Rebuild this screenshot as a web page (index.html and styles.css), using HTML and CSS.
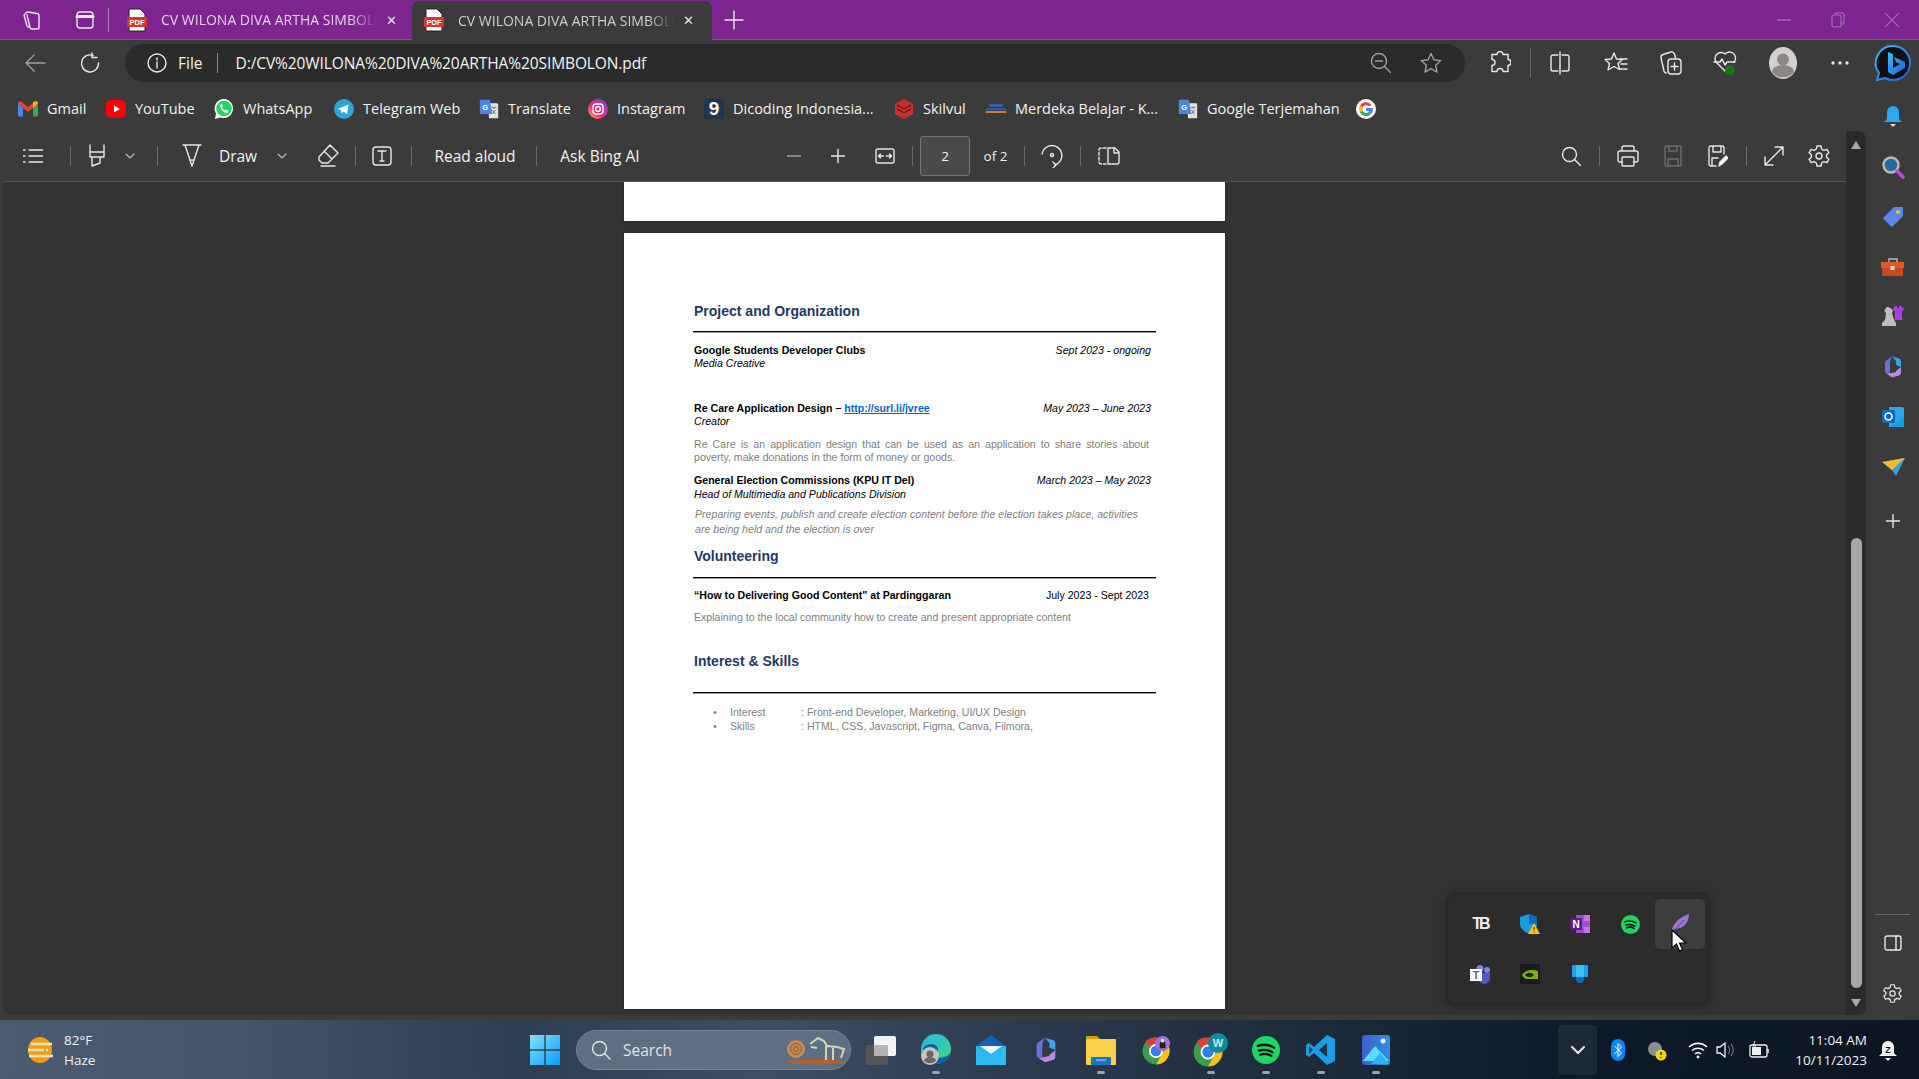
FILE: index.html
```html
<!DOCTYPE html>
<html>
<head>
    <title>CV WILONA DIVA ARTHA SIMBOLON.pdf</title>
    <meta name="viewport" content="width=device-width, initial-scale=1">
    <link rel="stylesheet" href="styles.css">
</head>
<body>

  <svg class="defs" width="0" height="0">
    <defs>
      <symbol id="pdf" viewBox="0 0 20 24">
        <path d="M2 1h11l5 5v17H2z" fill="#fff" stroke="#222" stroke-width="1"/>
        <rect x="0" y="9" width="20" height="10" fill="#d9352b"/>
        <text x="10" y="17" font-size="7.5" font-weight="700" text-anchor="middle" fill="#fff" font-family="Liberation Sans">PDF</text>
      </symbol>
      <symbol id="translate" viewBox="0 0 24 24">
        <path d="M11 5h11a1 1 0 0 1 1 1v17H12z" fill="#dfe3e6"/>
        <path d="M15 10h6M18 10v2M16 18l4-5M16 13l4 5" stroke="#666" stroke-width="1" fill="none"/>
        <path d="M2 1h11l3 17H2a1 1 0 0 1-1-1V2a1 1 0 0 1 1-1z" fill="#4a86e8"/>
        <text x="7.5" y="13" font-size="9" font-weight="700" text-anchor="middle" fill="#fff" font-family="Liberation Sans">G</text>
      </symbol>
      <symbol id="chrome" viewBox="0 0 48 48">
        <circle cx="24" cy="24" r="23" fill="#3a9d4a"/>
        <path d="M24 1a23 23 0 0 1 20 11.5H24a11.5 11.5 0 0 0-10.5 7L6 7.500A23 23 0 0 1 24 1z" fill="#e2402f"/>
        <path d="M44 12.500A23 23 0 0 1 24 47l10-17a11.500 11.500 0 0 0 0-17.500z" fill="#f8c11b"/>
        <circle cx="24" cy="24" r="10.500" fill="#2f7fee" stroke="#fff" stroke-width="3"/>
      </symbol>
      <symbol id="spotify" viewBox="0 0 48 48">
        <circle cx="24" cy="24" r="24" fill="#1ed760"/>
        <path d="M10 17c9-3 20-2 28 3M12 25c8-2 17-1 23 3M14 32c6-2 14-1 19 2" fill="none" stroke="#111" stroke-width="4" stroke-linecap="round"/>
      </symbol>
      <symbol id="copilot" viewBox="0 0 48 48">
        <path d="M22 3l14 4a6 6 0 0 1 4 6v11l-10-4V12z" fill="#3fa3e8"/>
        <path d="M40 24v11a6 6 0 0 1-4 6l-14 4-10-7 18-6z" fill="#b58be6"/>
        <path d="M22 3L12 10a6 6 0 0 0-4 6v16a6 6 0 0 0 4 6l6-2V12z" fill="#6a6fe0"/>
        <path d="M18 18l12 2v14l-12 3z" fill="#3b3b3b"/>
      </symbol>
      <symbol id="gear" viewBox="0 0 24 24">
        <path d="M10 2h4l.6 3 2.400 1.400 2.900-1 2 3.400-2.300 2v2.400l2.300 2-2 3.400-2.900-1L14.600 19l-.6 3h-4l-.6-3L7 17.600l-2.900 1-2-3.400 2.300-2v-2.400l-2.300-2 2-3.400 2.900 1L9.400 5z" fill="none" stroke="currentColor" stroke-width="1.400" stroke-linejoin="round"/>
        <circle cx="12" cy="12" r="3" fill="none" stroke="currentColor" stroke-width="1.400"/>
      </symbol>
    </defs>
  </svg>

  <div class="tabbar">
    <span class="tab-tool tool-space">
      <svg width="22" height="22" viewBox="0 0 22 22" class="ico"><path d="M7 3l9 1.500a2 2 0 0 1 2 2V19a1 1 0 0 1-1 1H11a2 2 0 0 1-2-1.500L6 6"/><path d="M4 5l2-2M3 6l3 11a2 2 0 0 0 2 1"/></svg>
    </span>
    <span class="tab-tool tool-tabs">
      <svg width="20" height="20" viewBox="0 0 20 20" class="ico"><rect x="2" y="2" width="16" height="16" rx="3"/><path d="M2 6.500h16" stroke-width="3"/></svg>
    </span>
    <span class="tab-sep"></span>
    <div class="tab">
      <svg class="tab-fav" width="20" height="24"><use href="#pdf"/></svg>
      <span class="tab-title">CV WILONA DIVA ARTHA SIMBOLON.pdf</span>
      <span class="tab-close">✕</span>
    </div>
    <div class="tab tab-active">
      <svg class="tab-fav" width="20" height="24"><use href="#pdf"/></svg>
      <span class="tab-title">CV WILONA DIVA ARTHA SIMBOLON.pdf</span>
      <span class="tab-close">✕</span>
    </div>
    <span class="tab-new">
      <svg width="20" height="20" viewBox="0 0 20 20" class="ico"><path d="M10 1v18M1 10h18"/></svg>
    </span>
    <div class="win-btns">
      <svg width="14" height="14" viewBox="0 0 14 14"><path d="M0 7h14"/></svg>
      <svg width="14" height="16" viewBox="0 0 14 16"><rect x="1" y="3" width="9" height="12" rx="2"/><path d="M4 3V2a1 1 0 0 1 1-1h6a2 2 0 0 1 2 2v8a1 1 0 0 1-1 1h-2"/></svg>
      <svg width="14" height="14" viewBox="0 0 14 14"><path d="M0 0l14 14M14 0L0 14"/></svg>
    </div>
  </div>

  <div class="navbar">
    <span class="nav-btn back">
      <svg width="22" height="22" viewBox="0 0 22 22" class="ico dim"><path d="M21 11H2M10 3l-8 8 8 8"/></svg>
    </span>
    <span class="nav-btn reload">
      <svg width="22" height="22" viewBox="0 0 22 22" class="ico"><path d="M14 3.500A8.500 8.500 0 1 0 19.500 11"/><path d="M13 1v4.500h5"/></svg>
    </span>
    <div class="address">
      <svg width="20" height="20" viewBox="0 0 20 20" class="ico"><circle cx="10" cy="10" r="9"/><path d="M10 9v6M10 5v2"/></svg>
      <span class="addr-file">File</span>
      <span class="addr-sep"></span>
      <span class="addr-url">D:/CV%20WILONA%20DIVA%20ARTHA%20SIMBOLON.pdf</span>
      <span class="addr-right">
        <svg width="22" height="22" viewBox="0 0 22 22" class="ico dim"><circle cx="9" cy="9" r="7.500"/><path d="M14.500 14.500l6 6M5.500 9h7"/></svg>
        <svg width="22" height="22" viewBox="0 0 22 22" class="ico dim"><path d="M11 1.500l2.900 6.300 6.800.8-5 4.700 1.300 6.800-6-3.400-6 3.400 1.300-6.800-5-4.700 6.800-.8z"/></svg>
      </span>
    </div>
    <div class="nav-tools">
      <span><svg width="22" height="24" viewBox="0 0 22 24" class="ico"><path d="M8 4a3 3 0 0 1 6 0h5v5a3 3 0 0 1 0 6v6h-5a3 3 0 0 0-6 0H3v-6a3 3 0 0 0 0-6V4z" transform="translate(0 -.500)"/></svg></span>
      <span class="nav-sep"></span>
      <span><svg width="22" height="24" viewBox="0 0 22 24" class="ico"><path d="M9 4H4a2 2 0 0 0-2 2v12a2 2 0 0 0 2 2h5M13 4h5a2 2 0 0 1 2 2v12a2 2 0 0 1-2 2h-5M11 1v22"/></svg></span>
      <span><svg width="24" height="24" viewBox="0 0 24 24" class="ico"><path d="M10 2l2.500 6 6 .5-4.500 4 1.500 6-5.500-3-6 3.500 1.500-6.500L1 8.500 7.500 8z"/><path d="M16 8h7M17 13h6M16 18h7"/></svg></span>
      <span><svg width="24" height="26" viewBox="0 0 24 26" class="ico"><path d="M7 23a3 3 0 0 1-2-2L2 8a3 3 0 0 1 2-3.500L12 2a3 3 0 0 1 3.500 2l1 4"/><rect x="9" y="9" width="13" height="15" rx="3"/><path d="M15.500 13v7M12 16.500h7"/></svg></span>
      <span><svg width="24" height="26" viewBox="0 0 24 26" class="ico"><path d="M12 21L4 13a6 6 0 0 1 8-9 6 6 0 0 1 9 8"/><path d="M1 12h6l2-3 3 6 2-3h8"/><circle cx="17" cy="20" r="5" fill="#107c10" stroke="none"/></svg></span>
      <span>
        <svg width="28" height="32" viewBox="0 0 28 32"><ellipse cx="14" cy="16" rx="14" ry="16" fill="#d4d0cc"/><circle cx="14" cy="12.500" r="6" fill="#8a8784"/><path d="M3 25a11 7 0 0 1 22 0 14 14 0 0 1-22 0z" fill="#8a8784"/></svg>
      </span>
      <span><svg width="18" height="4" viewBox="0 0 18 4" fill="#e6e6e6"><circle cx="2" cy="2" r="1.700"/><circle cx="9" cy="2" r="1.700"/><circle cx="16" cy="2" r="1.700"/></svg></span>
      <span>
        <svg width="38" height="38" viewBox="0 0 38 38"><defs><linearGradient id="bingg" x1="0" y1="0" x2="1" y2="1"><stop offset="0" stop-color="#37bdf8"/><stop offset="1" stop-color="#1f5fe0"/></linearGradient></defs><path d="M19 2a17 17 0 1 1-8 32L3 36l2-7A17 17 0 0 1 19 2z" fill="#111" stroke="url(#bingg)" stroke-width="2"/><path d="M14 8l5 2v14l7-4-4-2-2-5 11 5v6l-12 7-5-3z" fill="url(#bingg)"/></svg>
      </span>
    </div>
  </div>

  <div class="content">
    <div class="content-main">

      <div class="bookmarks">
        <span class="bm"><svg width="20" height="16" viewBox="0 0 20 16"><path d="M0 2v12a1.500 1.500 0 0 0 1.500 1.500H5V7z" fill="#4285f4"/><path d="M20 2v12a1.500 1.500 0 0 1-1.500 1.500H15V7z" fill="#34a853"/><path d="M0 2a2 2 0 0 1 3-1.500L10 6l7-5.500A2 2 0 0 1 20 2l-5 5-5 4-5-4z" fill="#ea4335"/><path d="M15 1l2-.500A2 2 0 0 1 20 2l-5 5z" fill="#fbbc04"/></svg>Gmail</span>
        <span class="bm"><svg width="20" height="20" viewBox="0 0 20 20"><rect y="1" width="20" height="18" rx="5" fill="#f00"/><path d="M8 6.500v7l6-3.500z" fill="#fff"/></svg>YouTube</span>
        <span class="bm"><svg width="20" height="22" viewBox="0 0 20 22"><path d="M10 1a9.500 9.500 0 0 0-8 14.500L1 21l5.500-1.500A9.500 9.500 0 1 0 10 1z" fill="#fff"/><circle cx="10" cy="10.500" r="7.800" fill="#25d366"/><path d="M7 6c-1.500 1-1 3.500 1 6s4.500 3.500 6 2.500l.5-1.500-2.500-1.500-1 1c-1.500-.5-2.500-2-3-3l1-1-1-2.500z" fill="#fff"/></svg>WhatsApp</span>
        <span class="bm"><svg width="20" height="20" viewBox="0 0 20 20"><circle cx="10" cy="10" r="10" fill="#2fa5da"/><path d="M3.500 10l11-4.500-1.500 9.500-3.500-2.500-2 2-.5-3.500z" fill="#fff"/></svg>Telegram Web</span>
        <span class="bm"><svg width="20" height="20"><use href="#translate"/></svg>Translate</span>
        <span class="bm"><svg width="20" height="20" viewBox="0 0 20 20"><defs><linearGradient id="insta" x1="0" y1="1" x2="1" y2="0"><stop offset="0" stop-color="#fdc04c"/><stop offset=".4" stop-color="#ee2a7b"/><stop offset="1" stop-color="#7b3fd1"/></linearGradient></defs><circle cx="10" cy="10" r="10" fill="url(#insta)"/><rect x="5" y="5" width="10" height="10" rx="3" fill="none" stroke="#fff" stroke-width="1.400"/><circle cx="10" cy="10" r="2.400" fill="none" stroke="#fff" stroke-width="1.400"/></svg>Instagram</span>
        <span class="bm"><span class="dicoding">9</span>Dicoding Indonesia...</span>
        <span class="bm"><svg width="20" height="20" viewBox="0 0 20 20"><path d="M10 0l9 5v10l-9 5-9-5V5z" fill="#c8302b"/><path d="M3 6l7 4 7-4M3 10l7 4 7-4" fill="none" stroke="#7c1a17" stroke-width="1.500"/></svg>Skilvul</span>
        <span class="bm"><svg width="20" height="12" viewBox="0 0 20 12"><rect x="3" y="1" width="14" height="3" fill="#3a5ba8"/><rect y="5" width="20" height="2" fill="#3556a3"/><rect y="8" width="20" height="2" fill="#c9803a"/></svg>Merdeka Belajar - K...</span>
        <span class="bm"><svg width="20" height="20"><use href="#translate"/></svg>Google Terjemahan</span>
        <span class="bm"><svg width="20" height="20" viewBox="0 0 20 20"><circle cx="10" cy="10" r="10" fill="#fff"/><path d="M15.500 6A7 7 0 0 0 4 6.500l2.500 2A4 4 0 0 1 13 7.500z" fill="#ea4335"/><path d="M4 6.500a7 7 0 0 0 0 7l2.500-2a4 4 0 0 1 0-3z" fill="#fbbc04"/><path d="M4 13.500a7 7 0 0 0 10.500 2l-2.400-2A4 4 0 0 1 6.500 11.500z" fill="#34a853"/><path d="M17 10a7 7 0 0 1-2.500 5.500l-2.400-2a3 3 0 0 0 1-1.500H10V9h7z" fill="#4285f4"/></svg></span>
      </div>

      <div class="pdf">
        <div class="pdf-col">
          <div class="pdf-toolbar">
            <div class="pt-left">
              <span><svg width="20" height="16" viewBox="0 0 20 16" class="ico"><path d="M6 2h14M6 8h14M6 14h14M0 2h2M0 8h2M0 14h2"/></svg></span>
              <span class="pt-sep"></span>
              <span><svg width="20" height="24" viewBox="0 0 20 24" class="ico"><path d="M3 1v7h14V1M3 8v5h14V8M5 13v9l8-3v-6"/></svg></span>
              <span><svg width="10" height="6" viewBox="0 0 10 6" class="ico thin"><path d="M1 1l4 4 4-4"/></svg></span>
              <span class="pt-sep"></span>
              <span><svg width="20" height="24" viewBox="0 0 20 24" class="ico"><path d="M1 1h18M3 1l5 15h4l5-15M8 16l2 6 2-6"/></svg></span>
              <span class="pt-text">Draw</span>
              <span><svg width="10" height="6" viewBox="0 0 10 6" class="ico thin"><path d="M1 1l4 4 4-4"/></svg></span>
              <span><svg width="22" height="24" viewBox="0 0 22 24" class="ico"><path d="M13 1l8 8-10 10H5l-3-3V13zM7 7l8 8M4 22h14"/></svg></span>
              <span class="pt-sep"></span>
              <span><svg width="20" height="20" viewBox="0 0 20 20" class="ico"><rect x="1" y="1" width="18" height="18" rx="3"/><path d="M6 5h8M10 5v10M8 15h4"/></svg></span>
              <span class="pt-sep"></span>
              <span class="pt-text">Read aloud</span>
              <span class="pt-sep"></span>
              <span class="pt-text">Ask Bing AI</span>
            </div>
            <div class="pt-mid">
              <span><svg width="14" height="2" viewBox="0 0 14 2" class="ico dim"><path d="M0 1h14"/></svg></span>
              <span><svg width="14" height="14" viewBox="0 0 14 14" class="ico"><path d="M0 7h14M7 0v14"/></svg></span>
              <span><svg width="20" height="16" viewBox="0 0 20 16" class="ico"><rect x="1" y="1" width="18" height="14" rx="2"/><path d="M3.500 8h5M3.500 8l2-2M3.500 8l2 2M11.500 8h5M16.500 8l-2-2M16.500 8l-2 2"/></svg></span>
              <span class="pt-sep"></span>
              <span><span class="page-num">2</span></span>
              <span class="pt-text small">of 2</span>
              <span class="pt-sep"></span>
              <span><svg width="22" height="24" viewBox="0 0 22 24" class="ico"><path d="M1 10a10 10 0 1 1 13 11M12 18l3 3-3 3"/><circle cx="11" cy="11" r="1.500"/></svg></span>
              <span class="pt-sep"></span>
              <span><svg width="22" height="18" viewBox="0 0 22 18" class="ico"><path d="M8 1H3a2 2 0 0 0-2 2v12a2 2 0 0 0 2 2h5" stroke-dasharray="3 2"/><path d="M10 1h7l4 4v10a2 2 0 0 1-2 2h-9zM16 1v5h5"/></svg></span>
            </div>
            <div class="pt-right">
              <span><svg width="20" height="20" viewBox="0 0 20 20" class="ico"><circle cx="8.500" cy="8.500" r="7"/><path d="M13.500 13.500l6 6"/></svg></span>
              <span class="pt-sep"></span>
              <span><svg width="22" height="22" viewBox="0 0 22 22" class="ico"><path d="M5 6V3a2 2 0 0 1 2-2h8a2 2 0 0 1 2 2v3M5 17H3a2 2 0 0 1-2-2V8a2 2 0 0 1 2-2h16a2 2 0 0 1 2 2v7a2 2 0 0 1-2 2h-2"/><rect x="5" y="12" width="12" height="9" rx="1"/></svg></span>
              <span><svg width="18" height="22" viewBox="0 0 18 22" class="ico gray"><rect x="1" y="1" width="16" height="20" rx="2"/><path d="M5 1v5h8V1M4 21v-7h10v7"/></svg></span>
              <span><svg width="20" height="22" viewBox="0 0 20 22" class="ico"><path d="M8 21H3a2 2 0 0 1-2-2V3a2 2 0 0 1 2-2h11a2 2 0 0 1 2 2v6M5 1v6h8V1M4 21v-8h6"/><path d="M11 21l1-4 6-6 2 2-6 6z" fill="#fff"/></svg></span>
              <span class="pt-sep"></span>
              <span><svg width="22" height="22" viewBox="0 0 22 22" class="ico"><path d="M2 20L20 2M12 2h8v8M2 12v8h8"/></svg></span>
              <span><svg width="24" height="24" class="gear-ico"><use href="#gear"/></svg></span>
            </div>
          </div>

          <div class="pdf-view">
            <div class="page page-stub"></div>
            <div class="page page-cv">
              <div class="cv-h">Project and Organization</div>
              <div class="cv-rule rule-first"></div>
              <div class="cv-row first"><b>Google Students Developer Clubs</b><i>Sept 2023 - ongoing</i></div>
              <div class="cv-role">Media Creative</div>
              <div class="cv-row gap-l"><b>Re Care Application Design – <a href="#">http://surl.li/jvree</a></b><i>May 2023 – June 2023</i></div>
              <div class="cv-role">Creator</div>
              <div class="cv-desc">Re Care is an application design that can be used as an application to share stories about poverty, make donations in the form of money or goods.</div>
              <div class="cv-row gap-m"><b>General Election Commissions (KPU IT Del)</b><i>March 2023 – May 2023</i></div>
              <div class="cv-role gap-xs">Head of Multimedia and Publications Division</div>
              <div class="cv-note">Preparing events, publish and create election content before the election takes place, activities are being held and the election is over</div>
              <div class="cv-h h-vol">Volunteering</div>
              <div class="cv-rule rule-vol"></div>
              <div class="cv-row vol"><b>“How to Delivering Good Content" at Pardinggaran</b><span class="vol-date">July 2023 - Sept 2023</span></div>
              <div class="cv-line">Explaining to the local community how to create and present appropriate content</div>
              <div class="cv-h h-int">Interest &amp; Skills</div>
              <div class="cv-rule rule-int"></div>
              <div class="skills">
                <div class="skill"><span class="dot">•</span><span>Interest</span><span>: Front-end Developer, Marketing, UI/UX Design</span></div>
                <div class="skill"><span class="dot">•</span><span>Skills</span><span>: HTML, CSS, Javascript, Figma, Canva, Filmora,</span></div>
              </div>
            </div>
          </div>
        </div>
        <div class="scrollbar">
          <span class="sb-up"></span>
          <span class="sb-thumb"></span>
          <span class="sb-down"></span>
        </div>
      </div>
    </div>

    <div class="sidebar">
      <span><svg width="20" height="24" viewBox="0 0 20 24"><path d="M10 1a6 6 0 0 1 6 6v7l3 3H1l3-3V7a6 6 0 0 1 6-6z" fill="#2fa7f0"/><path d="M7 19h6l-3 3z" fill="#ddd"/></svg></span>
      <span><svg width="24" height="24" viewBox="0 0 24 24"><circle cx="10" cy="10" r="7.500" fill="#1f6f9e" stroke="#b9b9b9" stroke-width="2.500"/><path d="M16 16l6 6" stroke="#c04bd8" stroke-width="3.500" stroke-linecap="round"/></svg></span>
      <span><svg width="22" height="22" viewBox="0 0 22 22"><path d="M12 1h8a1 1 0 0 1 1 1v8L11 20a2 2 0 0 1-2.500 0L2 13.500a2 2 0 0 1 0-2.500z" fill="#5c86f2"/><circle cx="16" cy="6" r="2" fill="#f6c20f"/></svg></span>
      <span><svg width="24" height="20" viewBox="0 0 24 20"><path d="M8 5V2h8v3" fill="none" stroke="#b5b5b5" stroke-width="1.500"/><rect y="5" width="23" height="6" fill="#e2582a"/><rect x="1" y="11" width="21" height="8" fill="#c94a22"/><rect x="9.500" y="9" width="4" height="4" fill="#ddd"/></svg></span>
      <span><svg width="24" height="24" viewBox="0 0 24 24"><path d="M9 3a3 3 0 0 1 2 5l2 7 2 3v3H1v-3l3-3 1-7a3 3 0 0 1 4-5z" fill="#bdbdbd"/><path d="M14 1h2v2h2V1h3v2h2V1v3l-2 3v6l1 2h-9l1-2V7l-2-3z" fill="#a93fe0"/></svg></span>
      <span><svg width="24" height="24"><use href="#copilot"/></svg></span>
      <span><svg width="22" height="22" viewBox="0 0 22 22"><path d="M7 1h13a2 2 0 0 1 2 2v17a1 1 0 0 1-1 1H7z" fill="#28a8ea"/><path d="M22 11v9a1 1 0 0 1-1 1H8z" fill="#14a0e0"/><rect y="4" width="13" height="13" rx="1.500" fill="#0f6cbd"/><circle cx="6.500" cy="10.500" r="3.500" fill="none" stroke="#fff" stroke-width="1.600"/></svg></span>
      <span><svg width="24" height="20" viewBox="0 0 24 20"><path d="M1 5l23-4-9 18-4-6z" fill="#2aa1ea"/><path d="M1 5l23-4-13 12z" fill="#f5b62a"/></svg></span>
      <span class="side-plus"><svg width="14" height="14" viewBox="0 0 14 14" class="ico"><path d="M0 7h14M7 0v14"/></svg></span>
      <div class="side-bottom">
        <div class="side-line"></div>
        <span><svg width="18" height="16" viewBox="0 0 18 16" class="ico"><rect x="1" y="1" width="16" height="14" rx="2"/><path d="M12 1v14"/></svg></span>
        <span><svg width="21" height="21" class="gear-ico"><use href="#gear"/></svg></span>
      </div>
    </div>
  </div>

  <div class="taskbar">
    <div class="weather">
      <svg width="30" height="30" viewBox="0 0 30 30"><ellipse cx="15" cy="15" rx="12" ry="13" fill="#f59d12"/><path d="M6 9h21M3 15h16M21 15h2M4 21h24" stroke="#f2e3c0" stroke-width="2.500"/></svg>
      <div class="weather-text"><div>82°F</div><div>Haze</div></div>
    </div>
    <svg class="start" width="30" height="30" viewBox="0 0 30 30"><defs><linearGradient id="win" x1="0" y1="0" x2="1" y2="1"><stop offset="0" stop-color="#7fe3ff"/><stop offset="1" stop-color="#0f9bf5"/></linearGradient></defs><path d="M0 0h14.300v14.300H0zM15.700 0H30v14.300H15.700zM0 15.700h14.300V30H0zM15.700 15.700H30V30H15.700z" fill="url(#win)"/></svg>
    <div class="searchbox">
      <svg width="20" height="20" viewBox="0 0 20 20" class="ico"><circle cx="8.500" cy="8.500" r="7"/><path d="M13.500 13.500l5.500 5.500"/></svg>
      <span>Search</span>
      <svg class="search-art" width="60" height="30" viewBox="0 0 60 30"><ellipse cx="30" cy="27" rx="29" ry="2.500" fill="#b5612c"/><circle cx="10" cy="14" r="9" fill="#c58a55"/><circle cx="10" cy="14" r="5.500" fill="none" stroke="#8a5b32"/><circle cx="10" cy="14" r="2.500" fill="none" stroke="#8a5b32"/><path d="M24 9l8-6 6 3 3 5 10 1 7 2-3 9M40 11v14M47 13v12M25 12l6 1" fill="none" stroke="#d8d2b8" stroke-width="2"/></svg>
    </div>
    <div class="apps">
      <span><svg width="32" height="30" viewBox="0 0 32 30"><rect x="1" y="10" width="22" height="20" rx="3" fill="#555"/><rect x="9" y="1" width="22" height="20" rx="2" fill="#f2f2f2"/><rect x="9" y="10" width="14" height="11" fill="#b5b5b5"/></svg></span>
      <span class="on"><svg width="30" height="32" viewBox="0 0 30 32"><defs><linearGradient id="edge" x1="0" y1="0" x2="1" y2="1"><stop offset="0" stop-color="#2bb7e8"/><stop offset="1" stop-color="#3ed97b"/></linearGradient></defs><circle cx="15" cy="15" r="15" fill="url(#edge)"/><path d="M2 14c5-6 15-5 15 2 0 3-2 4-4 4 5 6 12 4 16-1-1 7-7 11-14 11C7 30 1 23 2 14z" fill="#135ea8"/><circle cx="9" cy="22" r="9" fill="#c7c4c0"/><circle cx="9" cy="20" r="3.500" fill="#6b6966"/><path d="M3 27a6 4 0 0 1 12 0 9 9 0 0 1-12 0z" fill="#6b6966"/></svg></span>
      <span><svg width="30" height="30" viewBox="0 0 30 30"><path d="M15 0l15 11H0z" fill="#0f62b5"/><path d="M0 11h30v19H0z" fill="#28b6ee"/><path d="M4 11h22l-11 8z" fill="#f4f4f4"/><path d="M0 12l15 10 15-10v18H0z" fill="#2cbcf2"/></svg></span>
      <span><svg width="28" height="30"><use href="#copilot"/></svg></span>
      <span class="on"><svg width="30" height="30" viewBox="0 0 30 30"><path d="M0 2a1 1 0 0 1 1-1h10l3 3H0z" fill="#d89f06"/><rect y="4" width="30" height="26" rx="1" fill="#fbd04a"/><rect x="5" y="22" width="20" height="8" rx="1" fill="#1276c8"/><path d="M10 25h10" stroke="#bfe0f7"/></svg></span>
      <span><svg width="30" height="30" viewBox="0 0 30 32" class="badged"><use href="#chrome" width="30" height="30" y="2"/><circle cx="22" cy="9" r="8" fill="#a373d9"/><path d="M19 14v-5a3 3 0 0 1 6 0v5z" fill="#222"/><circle cx="22" cy="6" r="2" fill="#ddd"/></svg></span>
      <span class="on"><svg width="36" height="34" viewBox="0 0 36 34" class="badged-w"><use href="#chrome" width="30" height="30" y="4"/><circle cx="25" cy="10" r="10" fill="#0e8c9a"/><text x="25" y="14" font-size="11" font-weight="700" text-anchor="middle" fill="#cdeef2" font-family="Liberation Sans">W</text></svg></span>
      <span class="on"><svg width="28" height="28"><use href="#spotify"/></svg></span>
      <span class="on"><svg width="30" height="30" viewBox="0 0 30 30"><path d="M21 0l8 4v22l-8 4-13-12-5 4-3-2v-10l3-2 5 4z" fill="#1b9de8"/><path d="M21 8l-8 7 8 7z" fill="#2b2f3a"/><path d="M3 11l4 4-4 4z" fill="#2b3a50"/></svg></span>
      <span class="on"><svg width="28" height="30" viewBox="0 0 28 30"><defs><linearGradient id="photos" x1="0" y1="0" x2="1" y2="0"><stop offset="0" stop-color="#3f5fc4"/><stop offset="1" stop-color="#2d8fe8"/></linearGradient></defs><rect width="28" height="30" rx="3" fill="url(#photos)"/><circle cx="21" cy="6" r="2.500" fill="#e8eefb"/><path d="M1 26l12-15 14 15z" fill="#5bdcf8"/><path d="M9 29l9-11 9 11z" fill="#2ab5ef"/></svg></span>
    </div>
    <div class="tray">
      <span class="tray-more"><svg width="14" height="8" viewBox="0 0 14 8" class="ico"><path d="M1 1l6 6 6-6" stroke-width="2"/></svg></span>
      <svg class="tray-bt" width="14" height="22" viewBox="0 0 14 22"><rect width="14" height="22" rx="7" fill="#0a84ff"/><path d="M3.500 7l7 7-3.500 3.500v-13L10.500 8l-7 7" fill="none" stroke="#fff"/></svg>
      <svg class="tray-cloud" width="22" height="22" viewBox="0 0 22 22"><circle cx="9" cy="10" r="7" fill="#8b8f95"/><circle cx="15" cy="16" r="5.500" fill="#f0d60a"/><path d="M15 13v3M15 18v1" stroke="#222" stroke-width="1.500"/></svg>
      <svg class="tray-wifi" width="20" height="18" viewBox="0 0 20 18" class="ico"><path d="M1 6a13 13 0 0 1 18 0M4 9.500a9 9 0 0 1 12 0M7 13a4.500 4.500 0 0 1 6 0" fill="none" stroke="#f2f2f2" stroke-width="1.600"/><circle cx="10" cy="16" r="1.400" fill="#f2f2f2"/></svg>
      <svg class="tray-vol" width="20" height="18" viewBox="0 0 20 18"><path d="M1 6h3l5-4v14l-5-4H1z" fill="none" stroke="#f2f2f2" stroke-width="1.300"/><path d="M12 5a6 6 0 0 1 0 8M15 3a9 9 0 0 1 0 12" fill="none" stroke="#777" stroke-width="1.200"/></svg>
      <svg class="tray-bat" width="22" height="20" viewBox="0 0 22 20"><rect x="1" y="5" width="17" height="12" rx="2" fill="none" stroke="#f2f2f2" stroke-width="1.300"/><rect x="3" y="7" width="9" height="8" fill="#f2f2f2"/><path d="M19 9v4" stroke="#f2f2f2" stroke-width="1.500"/><path d="M6 1l-2 5h3" fill="none" stroke="#f2f2f2"/></svg>
      <div class="clock"><div>11:04 AM</div><div>10/11/2023</div></div>
      <svg class="tray-bell" width="20" height="24" viewBox="0 0 20 24"><path d="M10 3a6 6 0 0 1 6 6v6l3 3H1l3-3V9a6 6 0 0 1 6-6z" fill="#f2f2f2"/><path d="M7 20h6l-3 3z" fill="#f2f2f2"/><text x="10" y="15" font-size="9" font-weight="700" text-anchor="middle" fill="#111" font-family="Liberation Sans">Z</text></svg>
    </div>
  </div>

  <div class="tray-popup">
    <span><span class="tb-logo">TB</span></span>
    <span><svg width="20" height="20" viewBox="0 0 20 20"><path d="M9 0l8 3v7c0 5-4 8-8 10-4-2-9-5-9-10V3z" fill="#1a9be0"/><path d="M9 0l8 3v7H9z" fill="#0e6fb8"/><path d="M14 9l6 11H8z" fill="#fcc419"/><path d="M14 13v3M14 17.500v1" stroke="#222"/></svg></span>
    <span><svg width="20" height="18" viewBox="0 0 20 18"><rect x="6" width="14" height="18" fill="#a24fcb"/><path d="M14 0h6v6h-6zM14 12h6v6h-6z" fill="#c377e0"/><rect y="3" width="12" height="12" fill="#5a1e8c"/><text x="6" y="13" font-size="10" font-weight="700" text-anchor="middle" fill="#fff" font-family="Liberation Sans">N</text></svg></span>
    <span><svg width="19" height="19"><use href="#spotify"/></svg></span>
    <span class="tray-hover"><svg width="20" height="22" viewBox="0 0 20 22"><path d="M1 20C3 9 10 4 19 1c0 9-6 15-15 15z" fill="#9d74d2"/><path d="M1 21L14 7" stroke="#6b3fa8"/></svg></span>
    <span><svg width="21" height="19" viewBox="0 0 21 19"><circle cx="17" cy="5" r="3" fill="#7b83eb"/><circle cx="10" cy="3.500" r="3.500" fill="#7b83eb"/><path d="M6 8h14v5a6 6 0 0 1-12 0z" fill="#5059c9"/><rect y="4" width="12" height="12" fill="#fff"/><text x="6" y="13.500" font-size="10" font-weight="700" text-anchor="middle" fill="#4b53bc" font-family="Liberation Sans">T</text></svg></span>
    <span><svg width="20" height="20" viewBox="0 0 20 20"><rect width="20" height="20" fill="#1b1b1b"/><path d="M2 11c3-5 9-6 16-4v8H7C5 15 3 13 2 11z" fill="#76b900"/><path d="M5 11c3-3 6-3 9 0-3 3-6 3-9 0z" fill="#1b1b1b"/></svg></span>
    <span><svg width="18" height="18" viewBox="0 0 18 18"><path d="M1 1a1 1 0 0 1 1-1h14a1 1 0 0 1 1 1v11H1z" fill="#1da1e8"/><rect x="5" y="0" width="8" height="12" fill="#3cc0f2"/><path d="M5 12h8v3l-2 3H7l-2-3z" fill="#0d6cc0"/></svg></span>
  </div>

  <svg class="cursor" width="16" height="24" viewBox="0 0 16 24"><path d="M1 1v18l4.500-4 3 7 3-1.500-3-6.500H15z" fill="#fff" stroke="#000" stroke-width="1.200"/></svg>

</body>
</html>
```

FILE: styles.css
```css
* {
  box-sizing: border-box;
}

html, body {
  margin: 0;
  height: 100%;
}

body {
  width: 1919px;
  height: 1079px;
  overflow: hidden;
  display: flex;
  flex-direction: column;
  position: relative;
  font-family: "Open Sans", "Noto Sans", sans-serif;
  color: #f2f2f2;
  background-color: #3b3b3b;
}

.defs {
  position: absolute;
}

svg {
  display: block;
  flex: none;
}

.ico {
  fill: none;
  stroke: #e8e8e8;
  stroke-width: 1.4;
  stroke-linecap: round;
  stroke-linejoin: round;
}

.ico.thin {
  stroke: #bdbdbd;
  stroke-width: 1.1;
}

.ico.dim {
  stroke: #a0a0a0;
}

.ico.gray {
  stroke: #6e6e6e;
}

.gear-ico {
  color: #e8e8e8;
}

/* tab strip */
.tabbar {
  height: 40px;
  flex: none;
  display: flex;
  align-items: center;
  background-color: #7e2490;
  border-bottom: 1px solid #8c4a9a;
}

.tab-tool {
  display: flex;
  justify-content: center;
}

.tool-space {
  width: 64px;
}

.tool-tabs {
  width: 42px;
}

.tab-sep {
  width: 1px;
  height: 24px;
  margin-left: 2px;
  background-color: #b27fbd;
}

.tab {
  width: 298px;
  height: 39px;
  margin-left: 5px;
  padding: 0 12px 0 13px;
  display: flex;
  align-items: center;
  font-size: 14px;
  color: #e2d3e6;
}

.tab + .tab {
  margin-left: 0;
}

.tab-active {
  width: 300px;
  margin-top: 1px;
  padding: 0 12px 0 12px;
  background-color: #3b3b3b;
  border-radius: 7px 7px 0 0;
  color: #cfcfcf;
}

.tab-fav {
  margin-right: 14px;
}

.tab-title {
  width: 216px;
  overflow: hidden;
  white-space: nowrap;
  -webkit-mask-image: linear-gradient(to right, #000 88%, transparent);
  mask-image: linear-gradient(to right, #000 88%, transparent);
}

.tab-close {
  margin-left: 9px;
  font-size: 13px;
  color: #e8e8e8;
}

.tab-new {
  margin-left: 12px;
}

.win-btns {
  margin-left: auto;
  width: 142px;
  padding-right: 20px;
  display: flex;
  justify-content: space-between;
  align-items: center;
}

.win-btns svg {
  fill: none;
  stroke: #a86db5;
  stroke-width: 1.2;
}

/* nav row */
.navbar {
  height: 46px;
  flex: none;
  display: flex;
  align-items: center;
  background-color: #3b3b3b;
}

.nav-btn {
  display: flex;
  justify-content: center;
}

.back {
  width: 70px;
}

.reload {
  width: 40px;
}

.address {
  width: 1340px;
  height: 38px;
  margin-left: 15px;
  padding: 0 23px 0 22px;
  display: flex;
  align-items: center;
  background-color: #2b2b2b;
  border-radius: 19px;
}

.addr-file {
  margin-left: 11px;
  font-size: 15.5px;
}

.addr-sep {
  width: 1px;
  height: 20px;
  margin: 0 18px 0 14px;
  background-color: #8a8a8a;
}

.addr-url {
  font-size: 15.5px;
  letter-spacing: -0.1px;
  white-space: nowrap;
}

.addr-right {
  margin-left: auto;
  display: flex;
  gap: 28px;
}

.nav-tools {
  margin-left: 10px;
  display: grid;
  grid-template-columns: 50px 10px 50px 62px 48px 60px 56px 58px 48px;
  align-items: center;
  justify-items: center;
}

.nav-sep {
  width: 1px;
  height: 30px;
  background-color: #666;
}

/* bookmarks and viewer */
.content {
  flex: 1;
  display: flex;
  min-height: 0;
}

.content-main {
  width: 1866px;
  flex: none;
  display: flex;
  flex-direction: column;
}

.bookmarks {
  height: 45px;
  flex: none;
  padding-left: 18px;
  display: grid;
  grid-template-columns: 88px 108px 120px 145px 109px 116px 190px 92px 192px 178px 30px;
  align-items: center;
  font-size: 14.5px;
  white-space: nowrap;
}

.bm {
  display: flex;
  align-items: center;
  gap: 9px;
}

.dicoding {
  width: 20px;
  height: 20px;
  background-color: #20364e;
  color: #fff;
  font: 700 19px/19px "Liberation Sans", sans-serif;
  text-align: center;
}

.pdf {
  height: 884px;
  margin-left: 3px;
  flex: none;
  display: flex;
  background-color: #333;
  border-radius: 8px;
  overflow: hidden;
}

.pdf-col {
  width: 1843px;
  display: flex;
  flex-direction: column;
}

.pdf-toolbar {
  height: 51px;
  flex: none;
  padding-left: 2px;
  display: flex;
  align-items: center;
  background-color: #3b3b3b;
  border-bottom: 1px solid #555;
}

.pt-left, .pt-mid, .pt-right {
  display: grid;
  align-items: center;
  justify-items: center;
}

.pt-left {
  grid-template-columns: 56px 18px 36px 30px 24px 46px 46px 42px 50px 4px 50px 8px 120px 2px 126px;
}

.pt-mid {
  margin-left: 109px;
  grid-template-columns: 44px 44px 50px 5px 60px 41px 16px 40px 16px 42px;
}

.pt-right {
  margin-left: 415px;
  grid-template-columns: 52px 5px 52px 38px 52px 4px 52px 38px;
}

.pt-left > span, .pt-mid > span, .pt-right > span {
  display: flex;
  justify-content: center;
}

.pt-sep {
  width: 1px;
  height: 20px;
  background-color: #6b6b6b;
}

.pt-text {
  font-size: 15.5px;
  white-space: nowrap;
}

.pt-text.small {
  font-size: 13.5px;
}

.page-num {
  width: 50px;
  height: 40px;
  display: flex;
  align-items: center;
  justify-content: center;
  font-size: 13.5px;
  background-color: #4a4a4a;
  border: 1px solid #777;
  border-radius: 3px;
}

.pdf-view {
  flex: 1;
  min-height: 0;
  display: flex;
  flex-direction: column;
  align-items: center;
  gap: 12px;
  overflow: hidden;
}

.page {
  width: 601px;
  flex: none;
  background-color: #fff;
  box-shadow: 0 0 4px rgba(0, 0, 0, 0.3);
}

.page-stub {
  height: 39px;
}

/* the cv page */
.page-cv {
  height: 776px;
  padding: 69px 69px 0;
  font-family: "Liberation Sans", Arial, sans-serif;
  font-size: 10.6px;
  line-height: 13px;
  color: #000;
}

.cv-h {
  padding-left: 1px;
  font-size: 14px;
  font-weight: 700;
  line-height: 18px;
  color: #1f3864;
}

.cv-rule {
  height: 1px;
  background-color: #000;
  box-shadow: 0 0.4px 0 #000;
}

.rule-first {
  margin-top: 11px;
}

.rule-vol {
  margin-top: 12px;
}

.rule-int {
  margin-top: 22px;
}

.cv-row {
  padding: 0 5px 0 1px;
  display: flex;
  justify-content: space-between;
}

.cv-row a {
  color: #0563c1;
}

.cv-row.first {
  margin-top: 12px;
}

.gap-l {
  margin-top: 32px;
}

.gap-m {
  margin-top: 10px;
}

.gap-xs {
  margin-top: 1px;
}

.cv-role {
  padding-left: 1px;
  font-style: italic;
}

.cv-desc {
  margin-top: 10px;
  padding: 0 7px 0 1px;
  color: #808080;
  text-align: justify;
}

.cv-note {
  margin-top: 6px;
  padding: 0 7px 0 2px;
  line-height: 15px;
  font-style: italic;
  color: #808080;
}

.h-vol {
  margin-top: 10px;
}

.cv-row.vol {
  margin-top: 11px;
  padding-right: 7px;
}

.cv-line {
  margin-top: 9px;
  padding-left: 1px;
  color: #808080;
}

.h-int {
  margin-top: 28px;
}

.skills {
  margin-top: 12px;
  color: #808080;
  line-height: 14px;
}

.skill {
  display: grid;
  grid-template-columns: 37px 71px 1fr;
}

.dot {
  padding-left: 20px;
}

/* scrollbar */
.scrollbar {
  width: 20px;
  flex: none;
  padding-top: 10px;
  display: flex;
  flex-direction: column;
  align-items: center;
  background-color: #2b2b2b;
}

.sb-up, .sb-down {
  width: 0;
  height: 0;
  border-left: 5.5px solid transparent;
  border-right: 5.5px solid transparent;
}

.sb-up {
  border-bottom: 8px solid #a8a8a8;
}

.sb-thumb {
  width: 11px;
  height: 450px;
  margin-top: 389px;
  border-radius: 6px;
  background-color: #a6a6a6;
}

.sb-down {
  margin-top: 11px;
  border-top: 8px solid #a8a8a8;
}

/* right sidebar */
.sidebar {
  width: 53px;
  flex: none;
  margin-bottom: 0;
  padding: 6px 0 2px;
  display: flex;
  flex-direction: column;
  align-items: center;
}

.sidebar > span, .side-bottom > span {
  height: 50px;
  flex: none;
  display: flex;
  align-items: center;
  justify-content: center;
}

.side-plus {
  margin-top: 4px;
}

.side-bottom {
  margin-top: auto;
  display: flex;
  flex-direction: column;
  align-items: center;
}

.side-line {
  width: 35px;
  height: 1px;
  margin-bottom: 3px;
  background-color: #6a6a6a;
}

/* taskbar */
.taskbar {
  height: 59px;
  flex: none;
  display: flex;
  align-items: center;
  background: linear-gradient(to right, #4c5c70 0, #44566a 12%, #2d3d52 27%, #3e4f63 40%, #2d3c50 52%, #1d2b3b 68%, #0f1a29 82%, #0b1522 100%);
}

.weather {
  width: 530px;
  padding-left: 25px;
  display: flex;
  align-items: center;
  gap: 9px;
  flex: none;
}

.weather-text {
  font-size: 13.5px;
  line-height: 20px;
}

.searchbox {
  width: 275px;
  height: 40px;
  margin-left: 16px;
  padding: 0 4px 0 14px;
  flex: none;
  display: flex;
  align-items: center;
  gap: 12px;
  font-size: 15.5px;
  color: #dfe3e8;
  background-color: #5f6f82;
  border: 1px solid #74838f;
  border-radius: 20px;
}

.search-art {
  margin-left: auto;
}

.apps {
  margin-left: 2px;
  display: grid;
  grid-template-columns: repeat(10, 55px);
  align-items: center;
  justify-items: center;
}

.apps > span {
  height: 59px;
  width: 55px;
  display: flex;
  align-items: center;
  justify-content: center;
  position: relative;
}

.apps > span.on::after {
  content: "";
  position: absolute;
  left: 24px;
  bottom: 5px;
  width: 8px;
  height: 3px;
  border-radius: 2px;
  background-color: #9aa3ad;
}

.tray {
  margin-left: 155px;
  flex: 1;
  display: flex;
  align-items: center;
}

.tray-more {
  width: 39px;
  height: 50px;
  display: flex;
  align-items: center;
  justify-content: center;
  background-color: #1e2937;
  border-radius: 4px;
}

.tray-bt {
  margin-left: 14px;
}

.tray-cloud {
  margin-left: 21px;
}

.tray-wifi {
  margin-left: 20px;
}

.tray-vol {
  margin-left: 8px;
}

.tray-bat {
  margin-left: 13px;
}

.clock {
  width: 96px;
  font-size: 13.5px;
  line-height: 20px;
  text-align: right;
  white-space: nowrap;
}

.tray-bell {
  margin-left: 11px;
}

/* tray overflow flyout */
.tray-popup {
  position: absolute;
  left: 1447px;
  top: 893px;
  width: 262px;
  height: 111px;
  padding: 5px 7px;
  display: grid;
  grid-template-columns: repeat(5, 50px);
  grid-auto-rows: 50px;
  align-items: center;
  justify-items: center;
  background-color: #2c2c2c;
  border: 1px solid #262626;
  border-radius: 8px;
  box-shadow: 0 2px 10px rgba(0, 0, 0, 0.35);
}

.tray-popup > span {
  width: 50px;
  height: 50px;
  display: flex;
  align-items: center;
  justify-content: center;
}

.tray-hover {
  background-color: #3d3d3d;
  border-radius: 5px;
}

.tb-logo {
  font: 700 16px "Liberation Sans", sans-serif;
  color: #eee;
  letter-spacing: -3px;
}

.cursor {
  position: absolute;
  left: 1671px;
  top: 929px;
}
```
